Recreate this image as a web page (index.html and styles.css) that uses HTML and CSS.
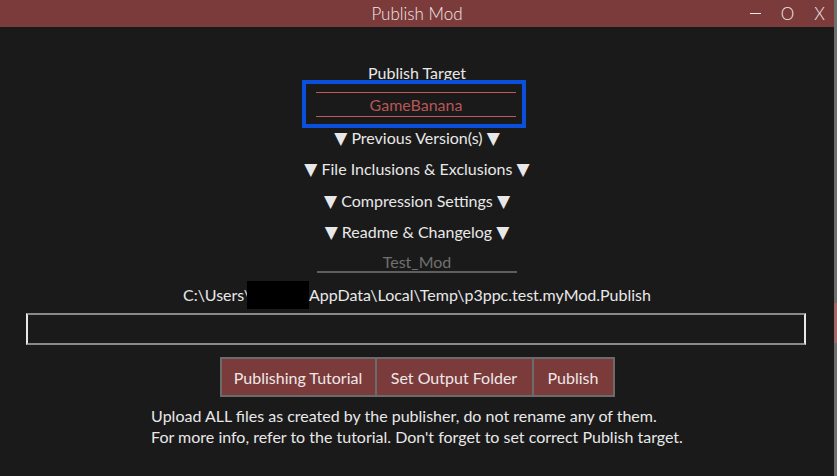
FILE: index.html
```html
<!DOCTYPE html>
<html>
<head>
<meta charset="utf-8">
<link rel="stylesheet" href="styles.css">
</head>
<body>
<div class="window">
  <header class="titlebar">
    <span class="title">Publish Mod</span>
    <div class="controls">
      <span class="ctl min" aria-label="minimize"></span>
      <span class="ctl max">O</span>
      <span class="ctl close">X</span>
    </div>
  </header>
  <main class="content">
    <div class="label">Publish Target</div>
    <div class="target-focus">
      <div class="target">GameBanana</div>
    </div>
    <div class="section first"><span class="tri">▼</span> Previous Version(s) <span class="tri">▼</span></div>
    <div class="section"><span class="tri">▼</span> File Inclusions &amp; Exclusions <span class="tri">▼</span></div>
    <div class="section"><span class="tri">▼</span> Compression Settings <span class="tri">▼</span></div>
    <div class="section"><span class="tri">▼</span> Readme &amp; Changelog <span class="tri">▼</span></div>
    <div class="name-input">Test_Mod</div>
    <div class="path">C:\Users\<span class="redact"></span>AppData\Local\Temp\p3ppc.test.myMod.Publish</div>
    <div class="output-box"></div>
    <div class="buttons">
      <button class="btn">Publishing Tutorial</button>
      <button class="btn">Set Output Folder</button>
      <button class="btn">Publish</button>
    </div>
    <p class="note">Upload ALL files as created by the publisher, do not rename any of them.<br>For more info, refer to the tutorial. Don't forget to set correct Publish target.</p>
  </main>
  <div class="edge"><div class="edge-pink"></div></div>
</div>
</body>
</html>
```
FILE: styles.css
```css
* { box-sizing: border-box; }
html, body {
  margin: 0;
  padding: 0;
  width: 837px;
  height: 476px;
  overflow: hidden;
  background: #1a1a1a;
  font-family: Lato, "Open Sans", sans-serif;
  color: #e8e8e8;
}
.window {
  position: relative;
  width: 837px;
  height: 476px;
}
.titlebar {
  height: 27px;
  width: 834px;
  background: #7b3b3b;
  display: flex;
  align-items: center;
  justify-content: center;
  position: relative;
}
.title {
  font-size: 17px;
  font-weight: 300;
  color: #f2e8e8;
}
.controls {
  position: absolute;
  right: 0;
  top: 0;
  height: 27px;
  display: flex;
  align-items: center;
}
.ctl {
  font-size: 17px;
  font-weight: 300;
  color: #f2e8e8;
  text-align: center;
  line-height: 20px;
  display: flex;
  justify-content: center;
}
.min {
  width: 11px;
  height: 1px;
  margin-right: 20px;
  background: #f2e8e8;
}
.max { width: 13px; margin-right: 20px; }
.close { width: 11px; margin-right: 9px; }
.content {
  width: 834px;
  display: flex;
  flex-direction: column;
  align-items: center;
  font-size: 16px;
}
.label {
  margin-top: 36px;
  line-height: 20px;
  height: 17px;
}
.target-focus {
  width: 224px;
  height: 48px;
  border: 4px solid #0a50dc;
  padding: 8px 6px 0 10px;
  margin-right: 6px;
}
.target {
  height: 25px;
  border-top: 1px solid #c05a5a;
  border-bottom: 1px solid #c05a5a;
  color: #b85656;
  text-align: center;
  line-height: 23px;
  font-size: 16px;
}
.section {
  line-height: 31px;
  height: 31.3px;
  font-size: 16px;
  white-space: nowrap;
}
.section.first { margin-top: -6px; }
.tri {
  font-family: "DejaVu Sans", sans-serif;
  font-size: 17px;
  line-height: 1;
}
.name-input {
  width: 200px;
  height: 26px;
  padding-top: 3px;
  text-align: center;
  color: #707070;
  border-bottom: 2px solid #5e5e5e;
  line-height: 24px;
}
.path {
  margin-top: 8px;
  height: 28px;
  line-height: 28px;
  display: flex;
  align-items: center;
  white-space: nowrap;
}
.redact {
  display: inline-block;
  width: 62px;
  height: 28px;
  background: #000;
  margin-left: -4px;
}
.output-box {
  margin-top: 4px;
  width: 780px;
  height: 32px;
  border-top: 2px solid #8a8a8a;
  border-bottom: 2px solid #8a8a8a;
  border-left: 2px solid #e8e8e8;
  border-right: 2px solid #e8e8e8;
  align-self: flex-start;
  margin-left: 26px;
}
.buttons {
  margin-top: 12px;
  display: flex;
}
.btn {
  height: 40px;
  background: #7b3b3b;
  border: 2px solid #6b6b6b;
  color: #f0e8e8;
  font-family: Lato, sans-serif;
  font-size: 16px;
  padding: 0;
  margin: 0;
}
.btn + .btn { border-left: none; }
.btn:nth-child(1) { width: 157px; }
.btn:nth-child(2) { width: 157px; }
.btn:nth-child(3) { width: 81px; }
.note {
  margin: 8px 0 0 0;
  font-size: 16px;
  line-height: 21px;
  text-align: left;
  white-space: nowrap;
}
.edge {
  position: absolute;
  right: 0;
  top: 0;
  width: 3px;
  height: 476px;
  background: #6e6e6e;
}
.edge-pink {
  margin-top: 303px;
  height: 40px;
  background: #a06a6a;
}
```
